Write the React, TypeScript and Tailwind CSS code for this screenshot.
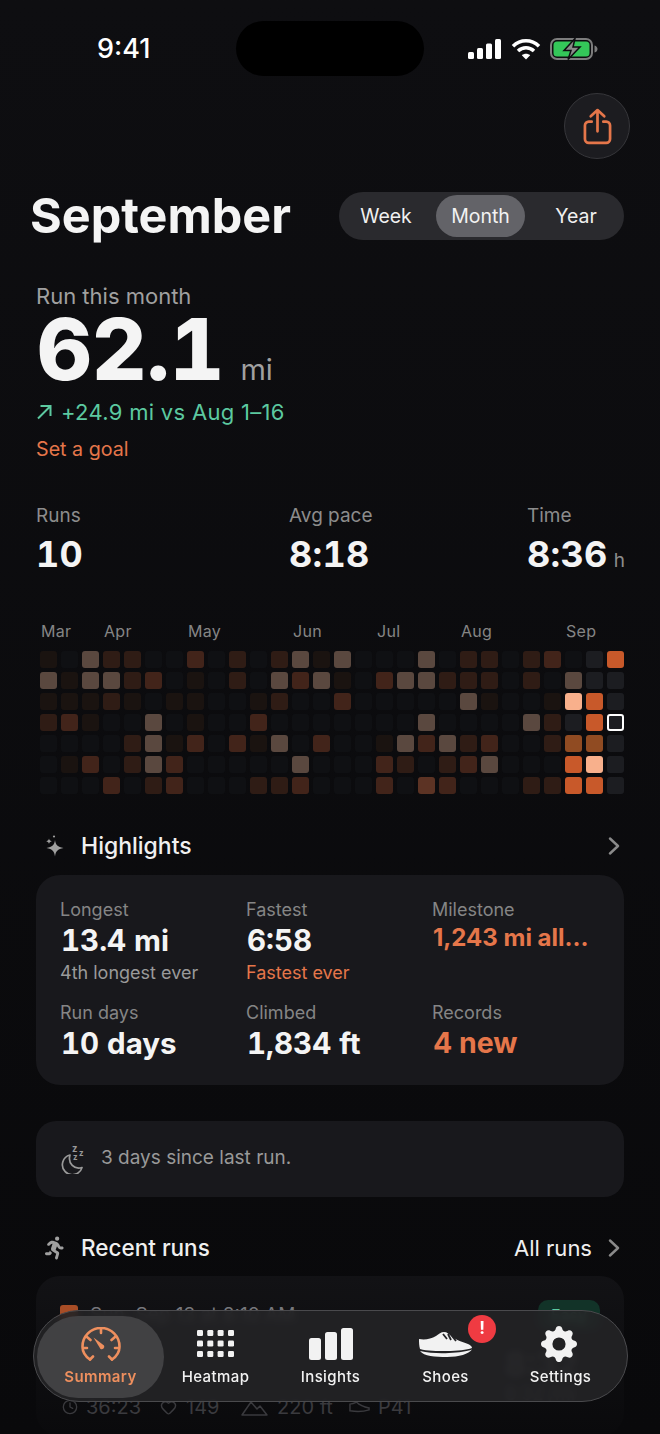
import { Clock, Heart } from "lucide-react";
import { BsGearFill } from "react-icons/bs";
import { FaPersonRunning } from "react-icons/fa6";

const HEAT = [
  "a.dbb..c.b.bdad...d.bb.bc.eO",
  "daddbc.a.b.dcda.cddbbb.b.dee",
  "aaaba.aa..ab..c.....da..aPOe",
  "bca..d.a..c.......d....dbeOT",
  "....bdac.cad.c..adcdbc..bMMe",
  ".ac.bdc.....d...cb.bcd...OPe",
  "...c.bc...bbc...c.fc...bbOOe",
];

const CELL: Record<string, string> = {
  ".": "bg-[#0f1013]",
  a: "bg-[#1a1310]",
  b: "bg-[#2f1c15]",
  c: "bg-[#42241a]",
  d: "bg-[#5a483f]",
  e: "bg-[#1c1d21]",
  f: "bg-[#5c3324]",
  M: "bg-[#904b22]",
  O: "bg-[#c8592a]",
  P: "bg-[#f8b08c]",
  T: "bg-[#1c1d21] border-2 border-white",
};

const MONTHS = [
  { label: "Mar", col: "col-start-1" },
  { label: "Apr", col: "col-start-4" },
  { label: "May", col: "col-start-8" },
  { label: "Jun", col: "col-start-13" },
  { label: "Jul", col: "col-start-17" },
  { label: "Aug", col: "col-start-21" },
  { label: "Sep", col: "col-start-26" },
];

function Chevron() {
  return (
    <svg viewBox="0 0 12 18" className="h-[18px] w-[12px]" fill="none" stroke="#8a8a8a" strokeWidth="2.400" strokeLinecap="round" strokeLinejoin="round">
      <path d="M2 1.500 10 9l-8 7.500" />
    </svg>
  );
}

function StatusIcons() {
  return (
    <div className="flex items-center">
      <svg viewBox="0 0 33 20" className="h-[20px] w-[33px]" fill="#fff">
        <rect x="0" y="13" width="6" height="7" rx="1.500" />
        <rect x="9" y="9" width="6" height="11" rx="1.500" />
        <rect x="18" y="4.500" width="6" height="15.500" rx="1.500" />
        <rect x="27" y="0" width="6" height="20" rx="1.500" />
      </svg>
      <svg viewBox="0 0 30 22" className="ml-[10px] h-[22px] w-[30px]" fill="none" stroke="#fff" strokeWidth="3.600">
        <path d="M2 8.200C9.500 1 20.500 1 28 8.200" />
        <path d="M7 13c4.700-4.300 11.300-4.300 16 0" />
        <path d="M15 21.500l-4.200-4.300c2.500-2 5.900-2 8.400 0z" fill="#fff" stroke="none" />
      </svg>
      <svg viewBox="0 0 48 22" className="ml-[9px] h-[22px] w-[48px]">
        <rect x="1" y="1" width="41" height="20" rx="6" fill="none" stroke="#7d7d7d" strokeWidth="2" />
        <rect x="3.500" y="3.500" width="36" height="15" rx="3.500" fill="#34c759" />
        <path d="M44.500 7.500c2 .5 3 2 3 3.500s-1 3-3 3.500z" fill="#7d7d7d" />
        <path d="M25 0.500L14 12.500h7l-3 9 12-12.500h-7z" fill="#8a8a8a" stroke="#0d0d10" strokeWidth="1.500" />
      </svg>
    </div>
  );
}

function Stat({ label, value, unit, className }: { label: string; value: string; unit?: string; className: string }) {
  return (
    <div className={className}>
      <div className="text-[19px] leading-[24px] text-[#8c8c8c]">{label}</div>
      <div className="mt-[4px] flex items-baseline text-[36px] leading-[44px] font-bold tracking-[0.3px] text-[#f4f4f4] tabular-nums">
        {value}
        {unit && <span className="ml-[6px] text-[19px] font-normal text-[#8c8c8c]">{unit}</span>}
      </div>
    </div>
  );
}

function Highlight({
  label,
  value,
  sub,
  orange,
  small,
  subOrange,
}: {
  label: string;
  value: string;
  sub?: string;
  orange?: boolean;
  small?: boolean;
  subOrange?: boolean;
}) {
  let valueClass = "pl-[1px] text-[29.5px] leading-[38px] text-[#f4f4f4] tabular-nums";
  if (orange) valueClass = "pl-[1px] text-[28.5px] leading-[38px] text-[#e5764a]";
  if (small) valueClass = "pl-[1px] text-[24px] leading-[34px] text-[#e5764a]";
  return (
    <div className="h-[103px] w-[186px]">
      <div className="text-[18px] leading-[22px] text-[#858585]">{label}</div>
      <div className={valueClass + " h-[40px] font-bold whitespace-nowrap"}>{value}</div>
      {sub && (
        <div className={(subOrange ? "text-[#e5764a] " : "text-[#9a9a9a] ") + "mt-[1px] text-[18px] leading-[22px]"}>
          {sub}
        </div>
      )}
    </div>
  );
}

function Sparkles() {
  return (
    <svg viewBox="0 0 20 22" className="h-[22px] w-[20px]" fill="#a0a0a0">
      <path d="M10 5c.7 4.800 2.600 7 8.500 8-5.900 1-7.800 3.200-8.500 8.500C9.300 16.200 7.400 14 1.500 13 7.400 12 9.300 9.800 10 5z" />
      <path d="M4 3.500c.3 1.500.9 2.200 2.800 2.700C4.900 6.700 4.300 7.400 4 9 3.700 7.400 3.100 6.700 1.200 6.200 3.100 5.700 3.700 5 4 3.500z" />
      <circle cx="9" cy="1.500" r="1.100" />
    </svg>
  );
}

function MoonZzz() {
  return (
    <svg viewBox="0 0 24 30" className="h-[30px] w-[24px]" fill="none" stroke="#9a9a9a" strokeWidth="1.700">
      <path d="M9 11a10 10 0 1 0 12 12.500C13.500 26 6.500 19.500 9 11z" strokeLinejoin="round" />
      <text x="11" y="7.500" fontSize="9.500" fill="#9a9a9a" stroke="none" fontFamily="Inter" fontWeight="700">z</text>
      <text x="18" y="12" fontSize="8" fill="#9a9a9a" stroke="none" fontFamily="Inter" fontWeight="700">z</text>
      <text x="12" y="16" fontSize="8" fill="#9a9a9a" stroke="none" fontFamily="Inter" fontWeight="700">z</text>
    </svg>
  );
}

function Gauge() {
  return (
    <svg viewBox="0 0 40 34" className="h-[34px] w-[40px]" fill="none" stroke="#ee8f5e" strokeWidth="2.600" strokeLinecap="round">
      <path d="M9 32.500C3 28.500 1.500 23 1.500 19.500a18.500 18.500 0 0 1 37 0c0 3.500-1.500 9-7.500 13" />
      <path d="M20 1.500v4.500M6 10l3.500 3M34 10l-3.500 3M2 21h4M38 21h-4M9 32.500l3-3M31 32.500l-3-3" />
      <path d="M12.500 10.500l10.500 8a2.600 2.600 0 0 1-3.500 3.500z" fill="#ee8f5e" stroke="none" />
    </svg>
  );
}

function HeatIcon() {
  const cols = [0, 10.3, 20.6, 31];
  const rows = [0, 10.5, 21];
  return (
    <svg viewBox="0 0 37 27" className="h-[27px] w-[37px]" fill="#f2f2f2">
      {rows.map((y) => cols.map((x) => <rect key={`${x}-${y}`} x={x} y={y} width="6" height="6" rx="1.200" />))}
    </svg>
  );
}

function BarsIcon() {
  return (
    <svg viewBox="0 0 44 32" className="h-[32px] w-[44px]" fill="#f2f2f2">
      <rect x="0" y="10" width="12" height="22" rx="2.500" />
      <rect x="16" y="4" width="12" height="28" rx="2.500" />
      <rect x="32" y="0" width="12" height="32" rx="2.500" />
    </svg>
  );
}

function ShoeIcon() {
  return (
    <svg viewBox="0 0 54 26" className="h-[26px] w-[54px]">
      <path
        d="M0 8C6 9 12 8 17 5 20 3 22 1 25 1 28 1 30 3 33 6 37 9 44 11 49 13 51 14 53 15 53 17 48 19 38 20 28 20 18 20 8 20 1 18 0 15 0 11 0 8z"
        fill="#f2f2f2"
      />
      <path d="M24 3l4 5M29 3l3 6M33 5l4 5" stroke="#242427" strokeWidth="1.800" />
      <path d="M1 20C10 22 20 22.500 30 22 40 21.500 48 20.500 53 18.500 50 23 40 26 28 26 16 26 5 25.500 1 20z" fill="#f2f2f2" />
    </svg>
  );
}

function TabItem({ label, icon, active }: { label: string; icon: React.ReactNode; active?: boolean }) {
  return (
    <div className="flex w-[115px] flex-col items-center">
      <div className="flex h-[36px] items-center justify-center">{icon}</div>
      <div
        className={
          (active ? "font-semibold text-[#ee8f5e] " : "font-medium text-[#f2f2f2] ") +
          "mt-[5px] text-[15px] leading-[20px] tracking-[0.4px]"
        }
      >
        {label}
      </div>
    </div>
  );
}

function TabBar() {
  return (
    <div className="absolute top-[1310px] left-[33px] flex h-[92px] w-[595px] items-center rounded-full border border-[#4a4a4d] bg-[#232326]/90 pl-[9px] backdrop-blur-[3px]">
      <div className="absolute top-[5px] left-[3px] h-[82px] w-[127px] rounded-full bg-[#454547]/90" />
      <div className="relative flex">
        <TabItem label="Summary" icon={<Gauge />} active />
        <TabItem label="Heatmap" icon={<HeatIcon />} />
        <TabItem label="Insights" icon={<BarsIcon />} />
        <div className="relative">
          <TabItem label="Shoes" icon={<ShoeIcon />} />
          <div className="absolute -top-[11px] left-[80px] flex h-[28px] w-[28px] items-center justify-center rounded-full bg-[#ef3b42] text-[17px] font-bold text-white">
            !
          </div>
        </div>
        <TabItem label="Settings" icon={<BsGearFill className="mr-[3px] h-[36px] w-[36px] text-[#f2f2f2]" />} />
      </div>
    </div>
  );
}

export default function App() {
  return (
    <div className="relative h-[1434px] w-[660px] overflow-hidden bg-gradient-to-b from-[#0e0e11] to-[#09090b] font-[family-name:Inter,sans-serif]">
      {/* status bar */}
      <div className="mt-[21px] flex h-[55px] items-center pl-[97px]">
        <div className="w-[139px] text-[27px] leading-[32px] font-medium text-white">9:41</div>
        <div className="h-[55px] w-[188px] rounded-full bg-black" />
        <div className="ml-[44px]">
          <StatusIcons />
        </div>
      </div>

      {/* share */}
      <div className="mt-[17px] flex justify-end pr-[30px]">
        <div className="flex h-[66px] w-[66px] items-center justify-center rounded-full border border-[#36363a] bg-[#1c1c20]">
          <svg viewBox="0 0 30 38" className="h-[37px] w-[29px]" fill="none" stroke="#e5764a" strokeWidth="2.800" strokeLinecap="round" strokeLinejoin="round">
            <path d="M15 24V2M8 8.500 15 2l7 6.500" />
            <path d="M9 14H6a4 4 0 0 0-4 4v14a4 4 0 0 0 4 4h18a4 4 0 0 0 4-4V18a4 4 0 0 0-4-4h-3" />
          </svg>
        </div>
      </div>

      {/* title */}
      <div className="mt-[33px] flex h-[48px] items-center justify-between pr-[36px] pl-[30px]">
        <h1 className="text-[48.5px] leading-[48px] font-bold text-[#f4f4f4]">September</h1>
        <div className="flex h-[48px] w-[285px] items-center rounded-full bg-[#2a2a2e] px-[3px] text-[19.5px] leading-[24px]">
          <div className="flex h-[42px] w-[94px] items-center justify-center pr-[6px] text-[#f0f0f0]">Week</div>
          <div className="flex h-[42px] w-[89px] items-center justify-center rounded-full bg-[#636368] text-[#f2f2f2]">Month</div>
          <div className="flex h-[42px] w-[96px] items-center justify-center pl-[6px] text-[#f0f0f0]">Year</div>
        </div>
      </div>

      {/* hero */}
      <div className="mt-[44px] pl-[36px]">
        <div className="text-[22px] leading-[24px] text-[#a0a0a0]">Run this month</div>
        <div className="mt-[8px] flex h-[68px] items-baseline pl-[1px]">
          <span className="text-[85px] leading-[68px] font-extrabold text-[#f4f4f4] tabular-nums">62.1</span>
          <span className="ml-[16px] text-[29px] leading-[68px] text-[#a0a0a0]">mi</span>
        </div>
        <div className="mt-[14px] flex items-center text-[22px] leading-[28px] tracking-[0.3px] text-[#5cc9a0]">
          <svg viewBox="0 0 16 16" className="mr-[9px] h-[16px] w-[16px]" fill="none" stroke="#5cc9a0" strokeWidth="2">
            <path d="M2 14.500 14 2.500M4.500 2H14.500V12" />
          </svg>
          +24.9 mi vs Aug 1–16
        </div>
        <div className="mt-[10px] text-[19.7px] leading-[26px] text-[#e5764a]">Set a goal</div>
      </div>

      {/* stats */}
      <div className="mt-[42px] flex pl-[36px]">
        <Stat label="Runs" value="10" className="w-[253px]" />
        <Stat label="Avg pace" value="8:18" className="w-[238px]" />
        <Stat label="Time" value="8:36" unit="h" className="w-[120px]" />
      </div>

      {/* heatmap */}
      <div className="mt-[37px] pl-[40px]">
        <div className="grid grid-cols-[repeat(28,17px)] gap-x-[4px] pl-[1px] text-[16px] leading-[22px] tracking-[0.3px] text-[#858585]">
          {MONTHS.map((m) => (
            <div key={m.label} className={m.col + " row-start-1 whitespace-nowrap"}>
              {m.label}
            </div>
          ))}
        </div>
        <div className="mt-[9px] grid grid-cols-[repeat(28,17px)] gap-[4px]">
          {HEAT.map((row, r) =>
            row.split("").map((c, i) => <div key={`${r}-${i}`} className={CELL[c] + " h-[17px] rounded-[3px]"} />),
          )}
        </div>
      </div>

      {/* highlights */}
      <div className="mt-[36px] flex h-[32px] items-center pr-[40px] pl-[45px]">
        <Sparkles />
        <div className="ml-[16px] flex-1 text-[23px] leading-[30px] font-medium text-[#f0f0f0]">Highlights</div>
        <Chevron />
      </div>
      <div className="mx-[36px] mt-[13px] flex h-[210px] flex-wrap rounded-[24px] bg-[#18181c] pt-[24px] pl-[24px]">
        <Highlight label="Longest" value="13.4 mi" sub="4th longest ever" />
        <Highlight label="Fastest" value="6:58" sub="Fastest ever" subOrange />
        <Highlight label="Milestone" value="1,243 mi all…" orange small />
        <Highlight label="Run days" value="10 days" />
        <Highlight label="Climbed" value="1,834 ft" />
        <Highlight label="Records" value="4 new" orange />
      </div>

      {/* last run */}
      <div className="mx-[36px] mt-[36px] flex h-[76px] items-center rounded-[20px] bg-[#18181c] pb-[1px] pl-[25px]">
        <MoonZzz />
        <div className="ml-[16px] text-[19px] text-[#999]">3 days since last run.</div>
      </div>

      {/* recent runs */}
      <div className="mt-[35px] flex h-[32px] items-center pr-[40px] pl-[45px]">
        <FaPersonRunning className="h-[24px] w-[20px] text-[#a0a0a0]" />
        <div className="ml-[16px] flex-1 text-[22.5px] leading-[30px] font-medium text-[#f0f0f0]">Recent runs</div>
        <div className="mr-[16px] text-[22px] leading-[30px] text-[#f0f0f0]">All runs</div>
        <Chevron />
      </div>
      <div className="mx-[36px] mt-[12px] h-[160px] rounded-[24px] bg-gradient-to-b from-[#121215] to-[#0a0a0c] px-[24px] pt-[24px] text-[#77777c]">
        <div className="flex items-start">
          <div className="mt-[5px] h-[18px] w-[18px] rounded-[3px] bg-[#a84d26]" />
          <div className="mt-[2px] ml-[12px] flex-1 text-[19px] leading-[26px]">Sun, Sep 13 at 8:10 AM</div>
          <div className="h-[30px] w-[62px] rounded-[10px] bg-[#123328] pt-[4px] text-center text-[16px] leading-[22px] text-[#5cc9a0]">Easy</div>
        </div>
        <div className="mt-[17px] flex">
          <div className="flex flex-1 pt-[48px] text-[20px] leading-[24px] text-[#3a3a3e]">
            <div className="flex w-[100px] items-center gap-[8px] pl-[2px]">
              <Clock className="h-[16px] w-[16px] shrink-0" />
              36:23
            </div>
            <div className="flex w-[81px] items-center gap-[9px]">
              <Heart className="h-[17px] w-[17px] shrink-0" />
              149
            </div>
            <div className="flex w-[108px] items-center gap-[9px]">
              <svg viewBox="0 0 27 17" className="h-[17px] w-[27px] shrink-0" fill="none" stroke="currentColor" strokeWidth="1.500" strokeLinejoin="round">
                <path d="M1 16 10 3l6 7 3-3 7 9z" />
              </svg>
              220 ft
            </div>
            <div className="flex items-center gap-[8px]">
              <svg viewBox="0 0 22 12" className="h-[12px] w-[21px] shrink-0" fill="none" stroke="currentColor" strokeWidth="1.500">
                <path d="M1 3c3 0 5-1 7-2 3 3 8 5 13 6v2c-6 2-14 2-20 1z" />
              </svg>
              P41
            </div>
          </div>
          <div className="w-[95px]">
            <div className="text-[32px] leading-[36px] font-bold text-[#55555a]">8:32</div>
            <div className="mt-[1px] text-[18px] leading-[20px] text-[#55555a]">8:32 /mi</div>
          </div>
        </div>
      </div>

      <TabBar />
    </div>
  );
}
